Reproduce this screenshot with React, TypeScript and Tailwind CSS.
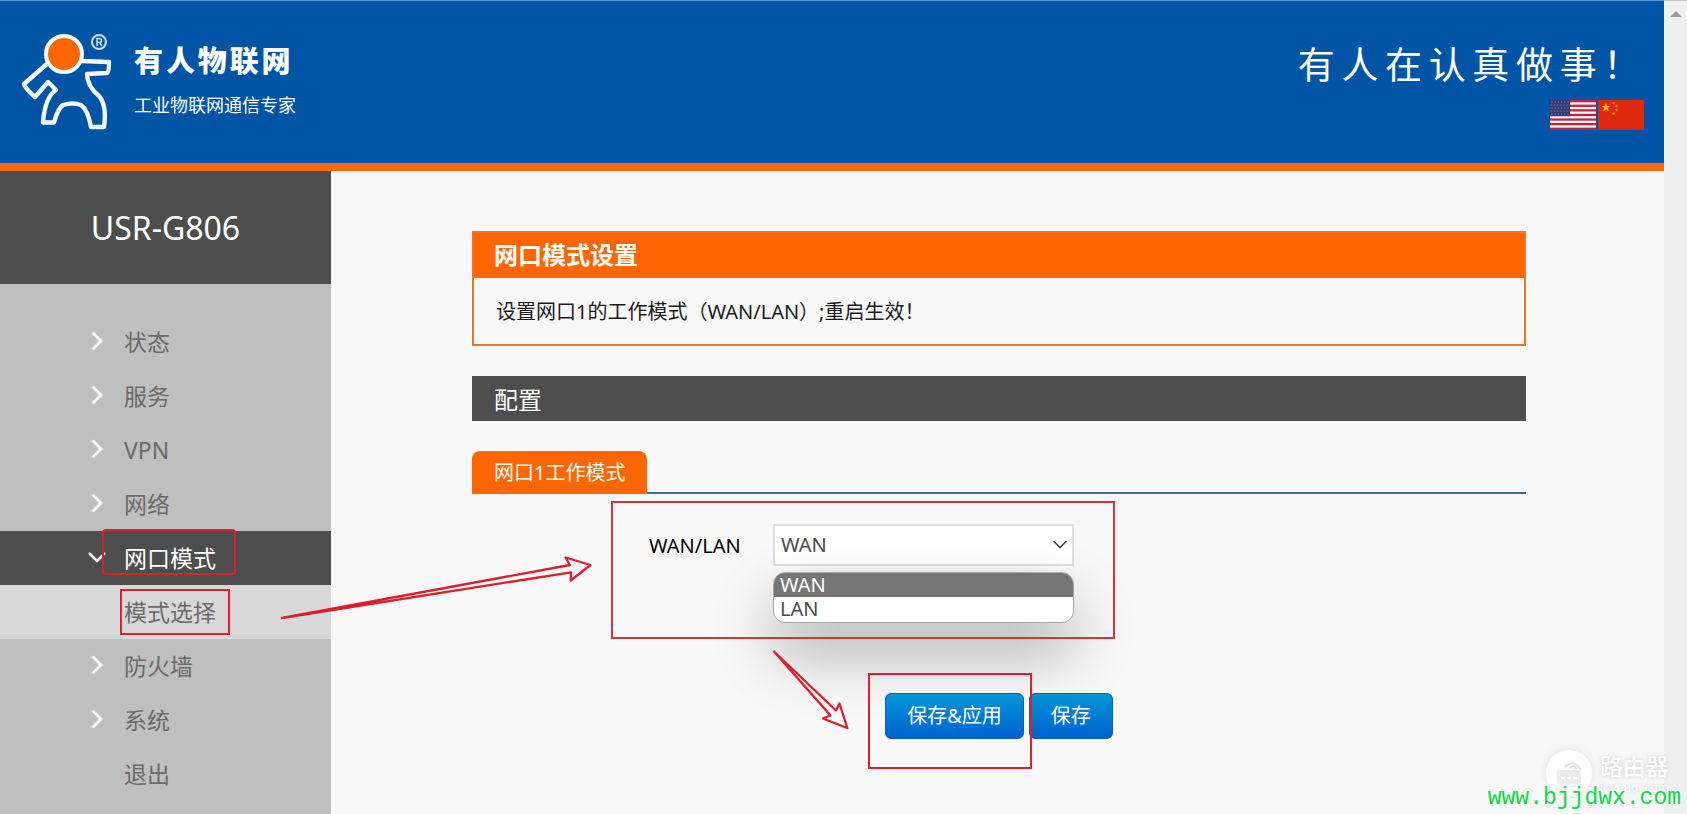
import React from "react";

const menu = [
  { label: "状态", kind: "closed" },
  { label: "服务", kind: "closed" },
  { label: "VPN", kind: "closed" },
  { label: "网络", kind: "closed" },
  { label: "网口模式", kind: "open" },
  { label: "模式选择", kind: "sub" },
  { label: "防火墙", kind: "closed" },
  { label: "系统", kind: "closed" },
  { label: "退出", kind: "plain" },
];

function Logo() {
  return (
    <svg className="h-[104px] w-24 shrink-0" viewBox="18 30 96 104" fill="none" aria-hidden="true">
      <path
        d="M48 63 L24 84 Q24 87 35 97 L48 82 L56 90 Q45 97 43 122.500 L54 122.500 Q58 108 63 105 Q73 102 81 105 Q88 110 91 127 L104 127 Q107 105 99 96 Q87 86 87 74 L107 73 Q109 72 109 62 L82 61"
        stroke="#f4faff"
        strokeWidth="4.400"
        strokeLinejoin="round"
      />
      <circle cx="64" cy="54" r="18" fill="#ff6600" stroke="#f4faff" strokeWidth="4" />
      <circle cx="99" cy="42" r="7" stroke="#c9def2" strokeWidth="2" />
      <path d="M97 46V38.500h2.500a2 2 0 0 1 0 4H97M99.500 42.500L102 46" stroke="#c9def2" strokeWidth="1.500" />
    </svg>
  );
}

function UsFlag() {
  return (
    <svg className="h-[30px] w-[46px]" viewBox="0 0 46 30" aria-hidden="true">
      <rect width="46" height="30" fill="#c4203c" />
      {[2.3, 6.9, 11.5, 16.1, 20.7, 25.3].map((y) => (
        <rect key={y} y={y} width="46" height="2.3" fill="#fff" />
      ))}
      <rect width="20" height="16.2" fill="#343a72" />
      {[2, 5, 8, 11, 14].map((y, r) =>
        [2, 5.2, 8.4, 11.6, 14.8, 18].map((x) => (
          <circle key={`${x}-${y}`} cx={r % 2 ? x - 0.8 : x} cy={y} r="0.5" fill="#a9afd0" />
        ))
      )}
    </svg>
  );
}

function CnFlag() {
  return (
    <svg className="h-[30px] w-[46px]" viewBox="0 0 46 30" aria-hidden="true">
      <rect width="46" height="30" fill="#de2910" />
      <path d="M8 3l1.100 3.100h3.300l-2.600 2 1 3.200L8 9.400l-2.800 1.900 1-3.200-2.600-2h3.300z" fill="#ffc800" />
      <g fill="#f0900a">
        <circle cx="15.500" cy="3" r="1.200" />
        <circle cx="18.500" cy="6" r="1.200" />
        <circle cx="18.500" cy="10" r="1.200" />
        <circle cx="15.500" cy="13.500" r="1.200" />
      </g>
    </svg>
  );
}

function Chevron({ down }: { down?: boolean }) {
  return down ? (
    <svg className="h-5 w-5" viewBox="0 0 20 20" fill="none" aria-hidden="true">
      <path d="M2 6l8 8 8-8" stroke="#f2f2f2" strokeWidth="2.600" />
    </svg>
  ) : (
    <svg className="h-5 w-5" viewBox="0 0 20 20" fill="none" aria-hidden="true">
      <path d="M5.500 1.500L14 10 5.500 18.500" stroke="#f8f8f8" strokeWidth="2.800" />
    </svg>
  );
}

function Header() {
  return (
    <header className="flex h-[171px] justify-between border-t border-b-8 border-t-[#5c9bd8] border-b-[#ff6a0a] bg-[#0054a6] text-white">
      <div className="flex pt-[29px] pl-[18px]">
        <Logo />
        <div className="flex flex-col gap-3 pt-[13px] pl-5">
          <strong className="text-[29px] leading-9 font-black tracking-widest">有人物联网</strong>
          <span className="text-[18px] leading-7">工业物联网通信专家</span>
        </div>
      </div>
      <div className="flex flex-col items-end pt-10 pr-5">
        <p className="-mr-[3px] text-[37px] leading-[48px] tracking-[0.18em]">有人在认真做事！</p>
        <div className="flex gap-[2px] pt-[11px]">
          <button type="button" aria-label="English"><UsFlag /></button>
          <button type="button" aria-label="中文"><CnFlag /></button>
        </div>
      </div>
    </header>
  );
}

function Sidebar() {
  return (
    <aside className="w-[331px] shrink-0 bg-[#bfbfbf]">
      <h1 className="flex h-[113px] items-center justify-center bg-[#4d4d4d] text-[32px] text-white">USR-G806</h1>
      <nav className="pt-[31px]">
        <ul>
          {menu.map((item) => (
            <li
              key={item.label}
              className={
                item.kind === "open"
                  ? "bg-[#4d4d4d] text-white"
                  : item.kind === "sub"
                    ? "bg-[#d8d8d8] text-[#6b6b6b]"
                    : "text-[#6b6b6b]"
              }
            >
              <a href="#" className="relative flex h-[54px] items-center pl-[87px] text-[23px]">
                <span className="flex w-[37px] pb-0.5">
                  {item.kind === "closed" && <Chevron />}
                  {item.kind === "open" && <Chevron down />}
                </span>
                {item.label}
                {item.kind === "open" && (
                  <span className="absolute top-[-2px] left-[102px] h-[46px] w-[134px] rounded-sm border-2 border-[#d8232f]" />
                )}
                {item.kind === "sub" && (
                  <span className="absolute top-1 left-[120px] h-[46px] w-[110px] border-2 border-[#d8232f]" />
                )}
              </a>
            </li>
          ))}
        </ul>
      </nav>
    </aside>
  );
}

function Main() {
  return (
    <main className="min-w-0 flex-1 bg-[#f8f8f8] pt-[60px] pr-[138px] pl-[141px]">
      <section className="border-2 border-[#ee7426]">
        <h2 className="flex h-[45px] items-center bg-[#ff6600] px-5 pb-0.5 text-[24px] font-bold text-white">网口模式设置</h2>
        <p className="flex h-[66px] items-center px-[22px] pt-0.5 text-[20px] text-[#1c1c1c]">
          设置网口1的工作模式（WAN/LAN）;重启生效！
        </p>
      </section>

      <h3 className="mt-[30px] flex h-[45px] items-center bg-[#4d4d4d] px-[22px] pt-0.5 text-[24px] text-white">配置</h3>

      <div className="mt-[30px] flex border-b-2 border-[#3a6ea5]">
        <button type="button" className="-mb-[2px] h-[43px] rounded-t-lg bg-[#ff6600] px-[22px] text-[20px] text-white">
          网口1工作模式
        </button>
      </div>

      <form onSubmit={(e) => e.preventDefault()}>
        <div className="relative flex items-center pt-[30px] pl-[177px]">
          <label htmlFor="mode" className="w-[124px] pt-0.5 text-[20px] text-black">WAN/LAN</label>
          <div className="relative w-[301px]">
            <select
              id="mode"
              defaultValue="WAN"
              className="block h-[42px] w-full appearance-none border-2 border-[#e0e0e0] bg-white pl-1.5 text-[20px] text-[#4a4a4a]"
            >
              <option>WAN</option>
              <option>LAN</option>
            </select>
            <svg className="pointer-events-none absolute top-3 right-1.5 h-4 w-4" viewBox="0 0 16 16" fill="none" aria-hidden="true">
              <path d="M1.500 5L8 11.500 14.500 5" stroke="#444" strokeWidth="1.700" />
            </svg>
            <ul
              role="listbox"
              aria-label="WAN/LAN"
              className="absolute top-12 left-0 h-[51px] w-full overflow-hidden rounded-xl border border-[#a8a8a8] bg-white text-[20px] leading-6 text-[#4a4a4a] shadow-[0_30px_60px_rgba(0,0,0,0.3)]"
            >
              <li role="option" aria-selected="true" className="bg-[#767676] px-1.5 text-white">WAN</li>
              <li role="option" aria-selected="false" className="px-1.5">LAN</li>
            </ul>
          </div>
          <span className="pointer-events-none absolute top-[7px] left-[139px] h-[138px] w-[504px] border-2 border-[#d8323f]" />
        </div>

        <div className="flex justify-center gap-[5px] pt-[127px]">
          <div className="relative">
            <button type="submit" className="h-[46px] rounded-md border border-[#0a62ad] bg-linear-to-b from-[#0096d8] to-[#0060d0] px-[21px] text-[20px] text-white">
              保存&amp;应用
            </button>
            <span className="pointer-events-none absolute top-[-20px] left-[-17px] z-10 h-[96px] w-[164px] border-2 border-[#e01f2d]" />
          </div>
          <button type="button" className="h-[46px] rounded-md border border-[#0a62ad] bg-linear-to-b from-[#0096d8] to-[#0060d0] px-[21px] text-[20px] text-white">
            保存
          </button>
        </div>
      </form>
    </main>
  );
}

function Arrows() {
  return (
    <svg className="pointer-events-none absolute top-0 left-0 h-[814px] w-[1100px]" viewBox="0 0 1100 814" fill="none" aria-hidden="true">
      <g stroke="#dc1f2b" strokeWidth="2.300" strokeLinejoin="round">
        <path d="M282 618L570 565 565.500 557.500 590.500 565 570.700 580.500 571 572.300Z" />
        <path d="M774 651.500L836 710.500 839.500 703.500 847.300 728 823 718.500 830.500 715.500Z" />
      </g>
    </svg>
  );
}

function Watermark() {
  return (
    <div className="pointer-events-none absolute right-1.5 bottom-1 flex flex-col items-end">
      <div className="flex items-start gap-2 pr-3">
        <svg className="-mb-6 h-[46px] w-[46px] rounded-full shadow-[0_0_10px_rgba(0,0,0,0.1)]" viewBox="0 0 46 46" fill="none" aria-hidden="true">
          <circle cx="23" cy="23" r="23" fill="#fff" />
          <rect x="11" y="20" width="24" height="14" rx="2" fill="#ececec" />
          <path d="M15 28h4M21 28h4M27 28h4" stroke="#fff" strokeWidth="2" />
          <path d="M19 17q8-9 16 3M24 18q4-4 7 1" stroke="#e2e2e2" strokeWidth="2" />
        </svg>
        <div className="-mb-2 text-[#fdfdfd] [text-shadow:0_0_4px_rgba(0,0,0,0.18)]">
          <div className="text-[23px] leading-8 font-medium">路由器</div>
          <div className="text-[12px] leading-3">luyouqi.com</div>
        </div>
      </div>
      <div className="font-['Liberation_Mono',monospace] text-[23px] leading-6 text-[#12d64a]">www.bjjdwx.com</div>
    </div>
  );
}

export default function App() {
  return (
    <div className="relative flex min-h-screen font-['Noto_Sans','Noto_Sans_CJK_SC',sans-serif]">
      <div className="flex min-w-0 flex-1 flex-col">
        <Header />
        <div className="flex flex-1">
          <Sidebar />
          <Main />
        </div>
      </div>
      <div className="flex w-[23px] shrink-0 justify-center border-t border-[#c8c8c8] bg-[#f0f0f0] pt-2.5">
        <svg className="h-[6px] w-3" viewBox="0 0 12 6" aria-hidden="true">
          <path d="M0 6L6 0l6 6z" fill="#9b9b9b" />
        </svg>
      </div>
      <Arrows />
      <Watermark />
    </div>
  );
}
